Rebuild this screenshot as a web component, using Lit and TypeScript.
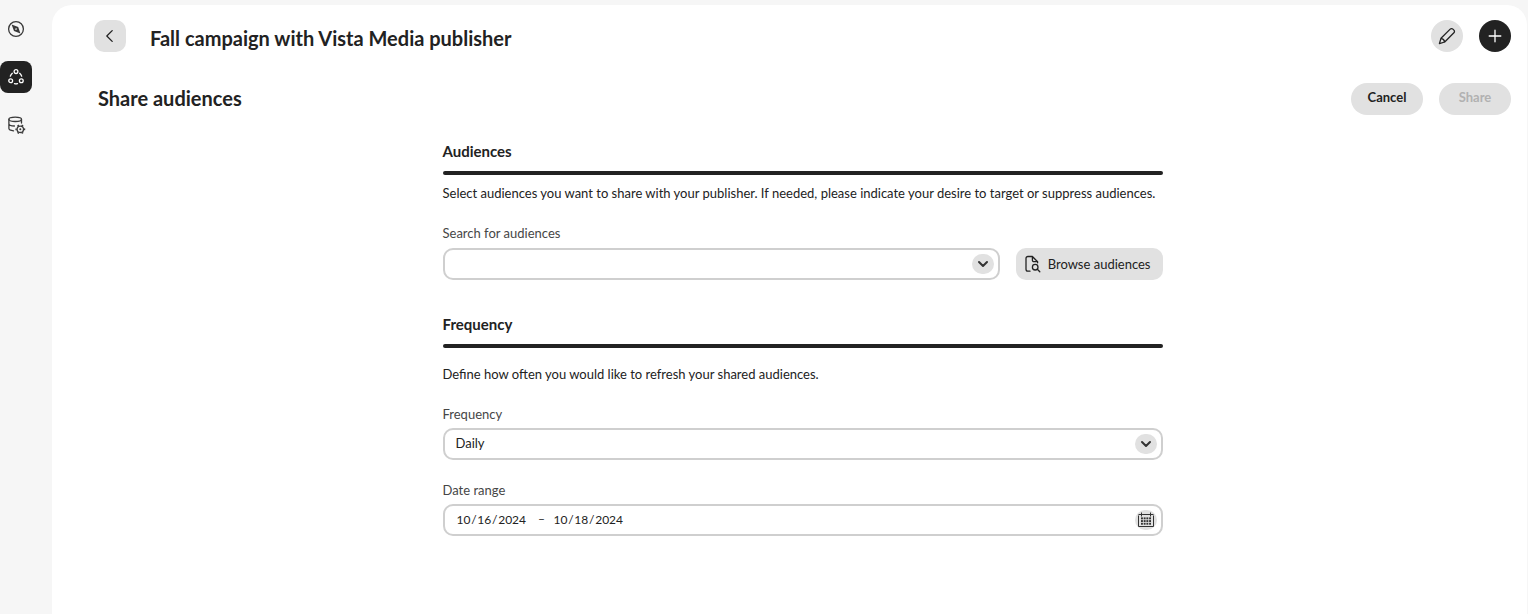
import { LitElement, html, css, svg } from "lit";
import { customElement, state } from "lit/decorators.js";

const compass = html`<svg class="icon" viewBox="0 0 20 20" aria-hidden="true">
  <circle cx="10" cy="10" r="7.4" />
  <path class="solid" fill-rule="evenodd" d="M5.6 5.6 L12.2 8 L14.4 14.4 L8 12.1 Z M9.3 9.4 L9.2 10.8 L10.7 10.7 L10.8 9.3 Z" />
</svg>`;

const network = html`<svg class="icon" viewBox="0 0 20 20" aria-hidden="true">
  <circle cx="10" cy="4.6" r="1.9" />
  <circle cx="4.7" cy="13.8" r="1.9" />
  <circle cx="15.3" cy="13.8" r="1.9" />
  <path d="M6.3 6.3 A6.5 6.5 0 0 0 4.3 9.2 M13.7 6.3 A6.5 6.5 0 0 1 15.7 9.2 M8.5 16.7 A6.5 6.5 0 0 0 11.5 16.7" />
</svg>`;

const teeth = [30, 90, 150, 210, 270, 330];
const dataGear = html`<svg class="icon" viewBox="0 0 20 20" aria-hidden="true">
  <ellipse cx="9.2" cy="4.3" rx="6.3" ry="2.2" />
  <path d="M2.9 4.3 V13.6 C2.9 14.8 4.8 15.6 7.6 15.8 M15.5 4.3 V8 M2.9 9 C3.2 10.2 5.2 11 8.4 11" />
  <circle cx="14.3" cy="14.3" r="3.2" />
  <circle class="solid" cx="14.3" cy="14.3" r="1" />
  ${teeth.map((a) => svg`<path class="tooth" d="M14.3 10.8 V9.4" transform="rotate(${a} 14.3 14.3)" />`)}
</svg>`;

const chevronLeft = html`<svg class="icon" viewBox="0 0 20 20" aria-hidden="true">
  <path d="M12.2 4.6 L6.8 10 L12.2 15.4" />
</svg>`;

const pencil = html`<svg class="icon" viewBox="0 0 20 20" aria-hidden="true">
  <path d="M4 12.3 L13.2 3.1 A1.9 1.9 0 0 1 15.9 3.1 L16.9 4.1 A1.9 1.9 0 0 1 16.9 6.8 L7.7 16 L2.4 17.6 Z M4 12.3 C5.8 12.6 7.3 14 7.7 16" />
</svg>`;

const plus = html`<svg class="icon" viewBox="0 0 20 20" aria-hidden="true">
  <path d="M10 4.2 V15.8 M4.2 10 H15.8" />
</svg>`;

const chevronDown = html`<svg class="chevron" viewBox="0 0 12 12" aria-hidden="true">
  <path d="M2 4 L6 8 L10 4" />
</svg>`;

const fileSearch = html`<svg class="icon" viewBox="0 0 20 20" aria-hidden="true">
  <path d="M8 17.2 H5.9 A1.9 1.9 0 0 1 4 15.3 V4.4 A1.9 1.9 0 0 1 5.9 2.5 H10.4 L15.6 7.7 V8.8 M10.4 2.5 V6.2 A1.4 1.4 0 0 0 11.8 7.6 H15.6" />
  <circle cx="13.2" cy="13.2" r="2.8" />
  <path d="M15.3 15.3 L17.8 17.8" />
</svg>`;

const dots = [0, 1, 2].flatMap((row) => [0, 1, 2, 3].map((col) => [col, row]));
const calendar = html`<svg class="calendar" viewBox="0 0 16 16" aria-hidden="true">
  <path d="M0.5 3.5 V14.5 H15.5 V3.5 M0.5 2.5 H15.5 M3.5 0.5 V4.5 M12.5 0.5 V4.5" />
  ${dots.map(([c, r]) => svg`<rect x=${3 + c * 2.7} y=${5.4 + r * 2.7} width="1.9" height="1.9" />`)}
</svg>`;

@customElement("app-root")
export class AppRoot extends LitElement {
  @state() private query = "";
  @state() private start = "10\u200a/\u200a16\u200a/\u200a2024";
  @state() private end = "10\u200a/\u200a18\u200a/\u200a2024";

  static styles = css`
    :host {
      display: block;
      font-family: Lato, sans-serif;
      font-size: 13px;
      line-height: 20px;
      color: #222;
    }
    * { box-sizing: border-box; }
    button, input, select { font: inherit; color: inherit; }
    button { border: 0; padding: 0; cursor: pointer; }
    h1, h2, h3, p { margin: 0; }
    svg { display: block; fill: none; stroke: currentColor; flex: none; }
    .icon { width: 20px; height: 20px; stroke-width: 1.3; stroke-linejoin: round; stroke-linecap: round; }
    .solid { fill: currentColor; stroke: none; }
    .tooth { stroke-width: 1.8; stroke-linecap: butt; }

    .shell {
      display: flex;
      min-height: 100vh;
      padding: 5px 1px 0 0;
      background: #f6f6f6;
    }
    .rail {
      display: flex;
      flex-direction: column;
      gap: 16px;
      width: 52px;
      padding-top: 8px;
    }
    .rail a {
      display: grid;
      place-items: center;
      width: 32px;
      height: 32px;
      border-radius: 8px;
      color: #3a3a3a;
    }
    .rail a.active { background: #222; color: #fff; }
    main {
      flex: 1;
      min-width: 0;
      padding: 15px 16px 32px 42px;
      background: #fff;
      border-radius: 20px 20px 0 0;
    }
    .bar { display: flex; align-items: center; gap: 16px; }
    .bar h1, .bar h2 { flex: 1; font-size: 20px; line-height: 24px; font-weight: 700; }
    .bar h1 { padding: 6px 0 2px 8px; }
    .bar h2 { padding-bottom: 2px; }
    .sub { margin-top: 31px; padding-left: 4px; }
    .square, .round {
      display: grid;
      place-items: center;
      width: 32px;
      height: 32px;
      background: #e1e1e1;
      border-radius: 10px;
    }
    .round { border-radius: 16px; }
    .dark { background: #222; color: #fff; }
    .pill {
      min-width: 72px;
      height: 32px;
      padding: 0 16px 4px;
      border-radius: 16px;
      background: #e1e1e1;
      font-weight: 700;
    }
    .pill:disabled { color: #b1b1b1; cursor: default; }

    form { max-width: 720px; margin: 24px auto 0; }
    section + section { margin-top: 32px; }
    h3 {
      padding-bottom: 8px;
      font-size: 15px;
      line-height: 24px;
      font-weight: 700;
    }
    h3::after {
      content: "";
      display: block;
      height: 4px;
      margin: 8px 0 -8px;
      border-radius: 2px;
      background: #222;
    }
    .lead { margin-top: 8px; }
    .roomy .lead { margin-top: 16px; }
    .field { margin-top: 20px; }
    .field label { display: block; margin-bottom: 5px; color: #464646; }
    .roomy .field label { margin-bottom: 4px; }
    .row { display: flex; gap: 16px; }
    .box {
      position: relative;
      flex: 1;
      display: flex;
      align-items: center;
      height: 32px;
      padding-right: 4px;
      border: 2px solid #cfcfcf;
      border-radius: 10px;
      background: #fff;
    }
    .box input, .box select {
      min-width: 0;
      height: 28px;
      padding: 0 0 2px;
      border: 0;
      outline: 0;
      background: none;
    }
    .box:focus-within { border-color: #6b6b6b; }
    .box .search { flex: 1; padding-left: 11px; }
    .box select { flex: 1; appearance: none; padding: 0 32px 2px 11px; }
    .chip {
      display: grid;
      place-items: center;
      width: 22px;
      height: 20px;
      border-radius: 10px;
      background: #e1e1e1;
      color: #333;
    }
    .over { position: absolute; right: 4px; pointer-events: none; }
    .chevron { width: 12px; height: 12px; stroke-width: 2; stroke-linecap: round; stroke-linejoin: round; }
    .calendar { width: 16px; height: 16px; stroke-width: 1; }
    .calendar rect { fill: currentColor; stroke: none; }
    .dates { padding-left: 12px; font-size: 12px; }
    .box .date { width: 73px; }
    .dash { width: 24px; padding-bottom: 2px; text-align: center; }
    .dates .chip { margin-left: auto; }
    .browse {
      display: flex;
      align-items: center;
      gap: 6px;
      height: 32px;
      padding: 0 12px 0 6px;
      border-radius: 10px;
      background: #e1e1e1;
    }
  `;

  render() {
    return html`
      <div class="shell">
        <nav class="rail" aria-label="Primary">
          <a href="#discover" aria-label="Discover">${compass}</a>
          <a href="#collaborate" class="active" aria-label="Collaborate" aria-current="page">${network}</a>
          <a href="#data" aria-label="Data settings">${dataGear}</a>
        </nav>
        <main>
          <header class="bar">
            <button class="square" aria-label="Back">${chevronLeft}</button>
            <h1>Fall campaign with Vista Media publisher</h1>
            <button class="round" aria-label="Edit">${pencil}</button>
            <button class="round dark" aria-label="Add">${plus}</button>
          </header>
          <div class="bar sub">
            <h2>Share audiences</h2>
            <button class="pill">Cancel</button>
            <button class="pill" disabled>Share</button>
          </div>
          <form @submit=${(e: Event) => e.preventDefault()}>
            <section>
              <h3>Audiences</h3>
              <p class="lead">Select audiences you want to share with your publisher. If needed, please indicate your desire to target or suppress audiences.</p>
              <div class="field">
                <label for="search">Search for audiences</label>
                <div class="row">
                  <div class="box">
                    <input id="search" class="search" type="text" autocomplete="off" .value=${this.query}
                      @input=${(e: Event) => (this.query = (e.target as HTMLInputElement).value)} />
                    <button type="button" class="chip" aria-label="Show audiences">${chevronDown}</button>
                  </div>
                  <button type="button" class="browse">${fileSearch}<span>Browse audiences</span></button>
                </div>
              </div>
            </section>
            <section class="roomy">
              <h3>Frequency</h3>
              <p class="lead">Define how often you would like to refresh your shared audiences.</p>
              <div class="field">
                <label for="frequency">Frequency</label>
                <div class="box">
                  <select id="frequency">
                    <option selected>Daily</option>
                  </select>
                  <span class="chip over">${chevronDown}</span>
                </div>
              </div>
              <div class="field">
                <label for="start">Date range</label>
                <div class="box dates">
                  <input id="start" class="date" type="text" .value=${this.start}
                    @change=${(e: Event) => (this.start = (e.target as HTMLInputElement).value)} />
                  <span class="dash">–</span>
                  <input class="date" type="text" aria-label="End date" .value=${this.end}
                    @change=${(e: Event) => (this.end = (e.target as HTMLInputElement).value)} />
                  <button type="button" class="chip" aria-label="Open calendar">${calendar}</button>
                </div>
              </div>
            </section>
          </form>
        </main>
      </div>
    `;
  }
}
